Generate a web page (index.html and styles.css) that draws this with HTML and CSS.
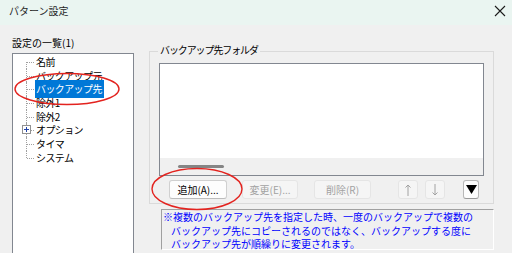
FILE: index.html
```html
<!DOCTYPE html>
<html lang="ja">
<head>
    <meta charset="UTF-8">
    <title>パターン設定</title>
    <link rel="stylesheet" href="styles.css">
</head>
<body>
    <div class="titlebar">
        <span class="title">パターン設定</span>
        <svg class="close" width="12" height="12" viewBox="0 0 12 12">
            <path d="M1 1 L11 11 M11 1 L1 11" stroke="#1b1b1b" stroke-width="1.1" fill="none"/>
        </svg>
    </div>
    <div class="main">
        <div class="left">
            <div class="list-label">設定の一覧(1)</div>
            <div class="tree">
                <ul>
                    <li><span>名前</span></li>
                    <li><span>バックアップ元</span></li>
                    <li><span class="selected">バックアップ先</span></li>
                    <li><span>除外1</span></li>
                    <li><span>除外2</span></li>
                    <li class="has-child"><i class="expander"></i><span>オプション</span></li>
                    <li><span>タイマ</span></li>
                    <li><span>システム</span></li>
                </ul>
            </div>
        </div>
        <div class="right">
            <fieldset class="group">
                <legend>バックアップ先フォルダ</legend>
                <div class="listbox">
                    <div class="list-area"></div>
                    <div class="hscroll"><div class="thumb"></div></div>
                </div>
                <div class="buttons">
                    <button class="btn btn-add">追加(A)...</button>
                    <button class="btn btn-edit" disabled>変更(E)...</button>
                    <button class="btn btn-del" disabled>削除(R)</button>
                    <button class="btn btn-up" disabled><svg width="6" height="12" viewBox="0 0 6 12"><path d="M3 1 V12 M0.5 3.5 L3 1 L5.5 3.5" stroke="#a2a2a2" stroke-width="1" fill="none"/></svg></button>
                    <button class="btn btn-down" disabled><svg width="6" height="12" viewBox="0 0 6 12"><path d="M3 0 V11 M0.5 8.5 L3 11 L5.5 8.5" stroke="#a2a2a2" stroke-width="1" fill="none"/></svg></button>
                    <button class="btn btn-menu"><svg width="11" height="9" viewBox="0 0 11 9"><path d="M0 0 H11 L5.5 9 Z" fill="#000"/></svg></button>
                </div>
            </fieldset>
            <div class="note">
                <span class="note-line">※複数のバックアップ先を指定した時、一度のバックアップで複数の</span>
                <span class="note-line indent">バックアップ先にコピーされるのではなく、バックアップする度に</span>
                <span class="note-line indent">バックアップ先が順繰りに変更されます。</span>
            </div>
        </div>
    </div>

    <!-- annotation marks -->
    <svg class="mark mark-tree" width="110" height="36" viewBox="0 0 110 36">
        <ellipse cx="55" cy="18" rx="52" ry="15.5" fill="none" stroke="#e3231f" stroke-width="1.4"/>
    </svg>
    <svg class="mark mark-add" width="96" height="46" viewBox="0 0 96 46">
        <ellipse cx="48" cy="23" rx="45" ry="20.5" fill="none" stroke="#e3231f" stroke-width="1.4"/>
    </svg>
</body>
</html>
```

FILE: styles.css
```css
*{
    box-sizing: border-box;
}
body{
    margin: 0;
    width: 512px;
    height: 253px;
    overflow: hidden;
    position: relative;
    background: #f0f0f0;
    font-family: "Noto Sans CJK JP", sans-serif;
    font-size: 10px;
    color: #000;
}
.titlebar{
    height: 25px;
    background: #eaf5f1;
    display: flex;
    align-items: center;
    justify-content: space-between;
    padding: 0 6px 4px 9px;
}
.title{
    color: #1f1f1f;
    line-height: 12px;
}
.main{
    display: flex;
    padding-left: 12px;
    gap: 15px;
    height: 228px;
}
.left{
    width: 122px;
    padding-top: 11px;
}
.list-label{
    line-height: 14px;
    margin-bottom: 3px;
}
.tree{
    background: #fff;
    border: 1px solid #828790;
    border-bottom: 0;
    height: 200px;
    padding-top: 1px;
}
.tree ul{
    list-style: none;
    margin: 0 0 0 13px;
    padding: 0;
}
.tree li{
    position: relative;
    height: 13.7px;
    line-height: 13.7px;
    padding-left: 9px;
    letter-spacing: -0.6px;
}
.tree li::before{
    content: "";
    position: absolute;
    left: 0;
    top: 0;
    bottom: 0;
    border-left: 1px dotted #a0a0a0;
}
.tree li:first-child::before{
    top: 50%;
}
.tree li:last-child::before{
    bottom: 50%;
}
.tree li::after{
    content: "";
    position: absolute;
    left: 1px;
    top: 50%;
    width: 7px;
    border-top: 1px dotted #a0a0a0;
}
.tree li span{
    padding: 0 1px;
}
.tree .selected{
    background: #0078d7;
    color: #fff;
    padding: 1px 2px 2px 1px;
}
.tree .expander{
    position: absolute;
    z-index: 1;
    left: -4px;
    top: 2px;
    width: 9px;
    height: 9px;
    border: 1px solid #919191;
    background: #fff linear-gradient(#2343a8, #2343a8) center / 5px 1px no-repeat;
}
.tree .expander::after{
    content: "";
    position: absolute;
    left: 3px;
    top: 1px;
    width: 1px;
    height: 5px;
    background: #2343a8;
}
.right{
    padding-top: 20px;
}
.group{
    width: 345px;
    margin: 0;
    padding: 0 9px 4px;
    border: 1px solid #dadada;
}
.group legend{
    margin-left: -1px;
    padding: 0 2px;
    line-height: 12px;
    letter-spacing: -1.1px;
    position: relative;
    top: -1px;
}
.listbox{
    margin-top: 6px;
    height: 113px;
    border: 1px solid #828790;
    background: #fff;
    display: flex;
    flex-direction: column;
}
.list-area{
    flex: 1;
}
.hscroll{
    height: 17px;
    background: #f0f0f0;
    padding: 7px 0 0 18px;
}
.hscroll .thumb{
    width: 46px;
    height: 3px;
    border-radius: 2px;
    background: #858585;
}
.buttons{
    display: flex;
    margin-top: 4px;
    height: 19px;
}
.btn{
    height: 19px;
    padding: 0;
    font: inherit;
    line-height: 17px;
    background: #fdfdfd;
    color: #000;
    border: 1px solid #d0d0d0;
    border-bottom-color: #bcbcbc;
    border-radius: 3px;
    display: flex;
    align-items: center;
    justify-content: center;
}
.btn:disabled{
    background: #f5f5f5;
    color: #a2a2a2;
    border-color: #e5e5e5;
}
.btn-add{
    width: 58px;
    margin-left: 10px;
}
.btn-edit{
    width: 56px;
    margin-left: 15px;
}
.btn-del{
    width: 57px;
    margin-left: 16px;
}
.btn-up{
    width: 20px;
    margin-left: 27px;
}
.btn-down{
    width: 20px;
    margin-left: 7px;
}
.btn-menu{
    width: 16px;
    margin-left: 18px;
    border-color: #b8b8b8;
    border-bottom-color: #9a9a9a;
}
.note{
    margin: 5px 0 0 12px;
    width: 333px;
    height: 41px;
    border-top: 1px solid #a0a0a0;
    border-left: 1px solid #a0a0a0;
    border-right: 1px solid #fff;
    border-bottom: 1px solid #fff;
    color: #0000ff;
    line-height: 13.5px;
    padding-left: 1px;
    white-space: nowrap;
}
.note-line{
    display: block;
}
.note-line.indent{
    padding-left: 8px;
}
.mark{
    position: absolute;
}
.mark-tree{
    left: 12px;
    top: 71px;
}
.mark-add{
    left: 149px;
    top: 166px;
}
```
